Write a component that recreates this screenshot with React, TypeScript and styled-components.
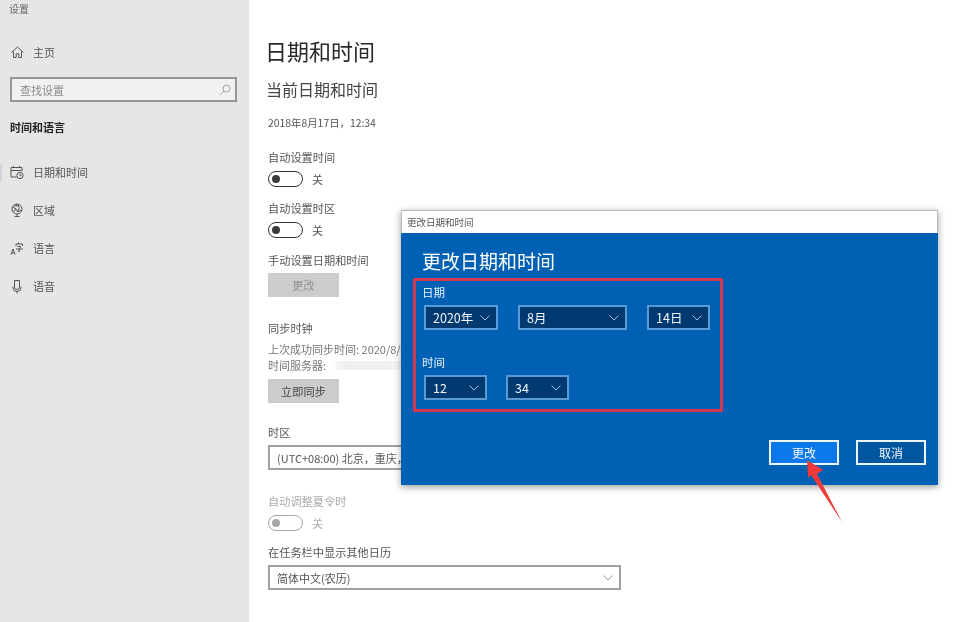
import React from "react";
import styled, { createGlobalStyle } from "styled-components";

const Global = createGlobalStyle`
  html, body { margin: 0; padding: 0; background: #fff; }
  body { font-family: "Noto Sans CJK SC", "Liberation Sans", sans-serif; overflow: hidden; }
  * { box-sizing: border-box; }
`;

const Page = styled.div`
  position: relative;
  width: 960px;
  height: 622px;
  display: flex;
  overflow: hidden;
  background: #fff;
  filter: blur(0.3px);
`;

const Sidebar = styled.aside`
  width: 249px;
  height: 622px;
  flex: none;
  background: #e6e6e6;
  display: flex;
  flex-direction: column;
  color: #444;
`;
const AppName = styled.div`
  font-size: 10px;
  line-height: 14px;
  color: #666;
  padding: 2px 0 0 9px;
`;
const NavRow = styled.div<{ $top: number }>`
  display: flex;
  align-items: center;
  height: 20px;
  margin-top: ${(p) => p.$top}px;
  padding-left: 10px;
  font-size: 11px;
  color: #555;
  position: relative;
`;
const NavIcon = styled.svg`
  width: 15px;
  height: 15px;
  flex: none;
  margin-right: 8px;
  fill: none;
  stroke: #555;
  stroke-width: 1;
`;
const ActiveMark = styled.div`
  position: absolute;
  left: 0;
  top: 2px;
  width: 2px;
  height: 18px;
  background: #d4d4dc;
`;
const Search = styled.div`
  width: 227px;
  height: 25px;
  margin: 15px 0 0 10px;
  border: 2px solid #969696;
  background: #f1f1f1;
  display: flex;
  align-items: center;
  justify-content: space-between;
  padding: 0 4px 0 8px;
  font-size: 11px;
  color: #8a8a8a;
`;
const SectionHead = styled.div`
  margin: 15px 0 0 10px;
  font-size: 11px;
  line-height: 20px;
  font-weight: 700;
  color: #222;
`;

const Main = styled.main`
  flex: 1;
  padding: 0 0 0 19px;
  color: #3a3a3a;
`;
const Title = styled.h1`
  margin: 34px 0 0 -3px;
  font-size: 22px;
  line-height: 32px;
  font-weight: 400;
  color: #2a2a2a;
`;
const Subtitle = styled.h2`
  margin: 11px 0 0 -2px;
  font-size: 16px;
  line-height: 24px;
  font-weight: 400;
  color: #444;
`;
const Label = styled.div<{ $top: number; $dim?: boolean }>`
  margin-top: ${(p) => p.$top}px;
  font-size: 11.2px;
  line-height: 16px;
  color: ${(p) => (p.$dim ? "#ababab" : "#555")};
  white-space: nowrap;
`;
const DateLine = styled.div`
  margin-top: 14px;
  font-size: 10.4px;
  line-height: 16px;
  color: #555;
  white-space: nowrap;
`;
const ToggleRow = styled.div<{ $dim?: boolean }>`
  margin-top: 6px;
  height: 16px;
  display: flex;
  align-items: center;
  gap: 9px;
  font-size: 11px;
  color: ${(p) => (p.$dim ? "#ababab" : "#555")};
`;
const Track = styled.div<{ $dim?: boolean }>`
  width: 35px;
  height: 16px;
  border-radius: 8px;
  border: 1.5px solid ${(p) => (p.$dim ? "#a6a6a6" : "#333")};
  padding: 2.5px;
  &::before {
    content: "";
    display: block;
    width: 8px;
    height: 8px;
    border-radius: 50%;
    background: ${(p) => (p.$dim ? "#a6a6a6" : "#3a3a3a")};
  }
`;
const GrayButton = styled.div<{ $top: number; $dim?: boolean }>`
  width: 71px;
  height: 24px;
  margin-top: ${(p) => p.$top}px;
  background: #cccccc;
  display: flex;
  align-items: center;
  justify-content: center;
  font-size: 11.2px;
  color: ${(p) => (p.$dim ? "#939393" : "#444")};
`;
const InfoLine = styled.div<{ $top?: number }>`
  display: flex;
  align-items: center;
  margin-top: ${(p) => p.$top ?? 0}px;
  font-size: 11px;
  line-height: 16px;
  color: #777;
  white-space: nowrap;
`;
const BlurredValue = styled.span`
  width: 74px;
  height: 9px;
  margin-left: 4px;
  background: linear-gradient(90deg, #fff, #efefef 20%, #f1f1f1 80%, #fafafa);
`;
const SelectBox = styled.div<{ $top: number }>`
  width: 353px;
  height: 25px;
  margin-top: ${(p) => p.$top}px;
  border: 2px solid #a0a0a0;
  background: #fff;
  display: flex;
  align-items: center;
  justify-content: space-between;
  padding: 0 6px 0 7px;
  font-size: 11px;
  color: #555;
  white-space: nowrap;
  overflow: hidden;
`;
const Chevron = styled.svg<{ $light?: boolean }>`
  width: 10px;
  height: 6px;
  flex: none;
  fill: none;
  stroke: ${(p) => (p.$light ? "#9fc0e2" : "#9a9a9a")};
  stroke-width: 1;
`;

const Dialog = styled.section`
  position: absolute;
  left: 401px;
  top: 210px;
  width: 537px;
  height: 275px;
  display: flex;
  flex-direction: column;
  background: #0060b4;
  box-shadow: 0 2px 7px rgba(0, 0, 0, 0.4);
`;
const DialogBar = styled.div`
  height: 23px;
  flex: none;
  background: #fff;
  border: 1px solid #b9b9b9;
  border-bottom: none;
  font-size: 9.5px;
  line-height: 22px;
  padding-left: 5px;
  color: #555;
`;
const DialogTitle = styled.h2`
  margin: 13px 0 0 21px;
  font-size: 19px;
  line-height: 30px;
  font-weight: 400;
  color: #fff;
`;
const Highlight = styled.div`
  width: 310px;
  height: 134px;
  margin: 2px 0 0 12px;
  border: 3px solid #d8374d;
  padding: 3px 0 0 6px;
  display: flex;
  flex-direction: column;
`;
const FieldLabel = styled.div<{ $top?: number }>`
  margin-top: ${(p) => p.$top ?? 0}px;
  font-size: 11.5px;
  line-height: 16px;
  color: #e6f0fa;
`;
const SelectRow = styled.div<{ $gap: number }>`
  display: flex;
  gap: ${(p) => p.$gap}px;
  margin: 5px 0 0 2px;
`;
const DarkSelect = styled.div<{ $w: number }>`
  width: ${(p) => p.$w}px;
  height: 25px;
  background: #003a70;
  border: 2px solid #5b9bd5;
  display: flex;
  align-items: center;
  justify-content: space-between;
  padding: 0 6px 0 7px;
  font-size: 12.5px;
  color: #f2f6fb;
`;
const DialogActions = styled.div`
  display: flex;
  justify-content: flex-end;
  gap: 17px;
  margin-top: 28px;
  padding-right: 12px;
`;
const ActionButton = styled.div<{ $primary?: boolean }>`
  width: 70px;
  height: 25px;
  border: 2px solid #eef6fd;
  background: ${(p) => (p.$primary ? "#0a78e8" : "#00569f")};
  display: flex;
  align-items: center;
  justify-content: center;
  font-size: 12px;
  color: #f4f8fc;
`;
const Arrow = styled.svg`
  position: absolute;
  left: 800px;
  top: 455px;
  width: 50px;
  height: 72px;
`;

const ChevronDown = ({ light }: { light?: boolean }) => (
  <Chevron $light={light} viewBox="0 0 10 6">
    <path d="M0.5 0.5 L5 5 L9.5 0.5" />
  </Chevron>
);

const Toggle = ({ dim }: { dim?: boolean }) => (
  <ToggleRow $dim={dim}>
    <Track $dim={dim} />
    关
  </ToggleRow>
);

export default function App() {
  return (
    <Page>
      <Global />
      <Sidebar>
        <AppName>设置</AppName>
        <NavRow $top={26}>
          <NavIcon viewBox="0 0 15 15">
            <path d="M1.5 7.5 L7.5 2 L13.5 7.5 M3.5 6.5 V12.5 H6.2 V8.8 H8.8 V12.5 H11.5 V6.5" />
          </NavIcon>
          主页
        </NavRow>
        <Search>
          查找设置
          <svg width="12" height="12" viewBox="0 0 12 12" fill="none" stroke="#a0a0a0">
            <circle cx="7.5" cy="4.5" r="3.5" />
            <path d="M5 7 L1 11" />
          </svg>
        </Search>
        <SectionHead>时间和语言</SectionHead>
        <NavRow $top={25}>
          <ActiveMark />
          <NavIcon viewBox="0 0 15 15">
            <path d="M6.5 12 H1 V2.5 H12 V6 M1 5.5 H12 M3.5 1 V3 M9.5 1 V3" />
            <circle cx="10" cy="10.5" r="3.2" />
            <path d="M10 8.8 V10.7 H11.5" />
          </NavIcon>
          日期和时间
        </NavRow>
        <NavRow $top={18}>
          <NavIcon viewBox="0 0 15 15">
            <circle cx="7" cy="6" r="5" />
            <path d="M2.5 4 L6 6 L3.5 9 M6 1.5 L9.5 4.5 L7.5 8.5 L11.5 7.5 M4 3 L9 2.5 M6 6 L8 9 M7 11 V13.5 M4.5 13.5 H9.5" />
          </NavIcon>
          区域
        </NavRow>
        <NavRow $top={18}>
          <NavIcon viewBox="0 0 15 15">
            <path d="M1 13.5 L3 8 L5 13.5 M1.7 12 H4.3 M8.5 1.5 V3 M6 5 V3 H12.5 V5 M7.5 5.5 H11 L9.3 7.2 V10.5 L8 10.5 M6 8 H13" />
          </NavIcon>
          语言
        </NavRow>
        <NavRow $top={18}>
          <NavIcon viewBox="0 0 15 15">
            <path d="M4.5 1.5 H9.5 V8 A2.5 2.5 0 0 1 4.5 8 Z" />
            <path d="M3 7.5 V8.5 A4 4 0 0 0 11 8.5 V7.5 M7 12.5 V14.5" />
          </NavIcon>
          语音
        </NavRow>
      </Sidebar>
      <Main>
        <Title>日期和时间</Title>
        <Subtitle>当前日期和时间</Subtitle>
        <DateLine>2018年8月17日，12:34</DateLine>
        <Label $top={18}>自动设置时间</Label>
        <Toggle />
        <Label $top={13}>自动设置时区</Label>
        <Toggle />
        <Label $top={14}>手动设置日期和时间</Label>
        <GrayButton $top={5} $dim>更改</GrayButton>
        <Label $top={23}>同步时钟</Label>
        <InfoLine $top={5}>上次成功同步时间: 2020/8/</InfoLine>
        <InfoLine>
          时间服务器:<BlurredValue />
        </InfoLine>
        <GrayButton $top={6}>立即同步</GrayButton>
        <Label $top={21}>时区</Label>
        <SelectBox $top={5}>(UTC+08:00) 北京，重庆，香港特别行政区，乌鲁木齐</SelectBox>
        <Label $top={23} $dim>自动调整夏令时</Label>
        <Toggle dim />
        <Label $top={13}>在任务栏中显示其他日历</Label>
        <SelectBox $top={5}>
          简体中文(农历)
          <ChevronDown />
        </SelectBox>
      </Main>
      <Dialog>
        <DialogBar>更改日期和时间</DialogBar>
        <DialogTitle>更改日期和时间</DialogTitle>
        <Highlight>
          <FieldLabel>日期</FieldLabel>
          <SelectRow $gap={20}>
            <DarkSelect $w={74}>2020年<ChevronDown light /></DarkSelect>
            <DarkSelect $w={109}>8月<ChevronDown light /></DarkSelect>
            <DarkSelect $w={63}>14日<ChevronDown light /></DarkSelect>
          </SelectRow>
          <FieldLabel $top={24}>时间</FieldLabel>
          <SelectRow $gap={19}>
            <DarkSelect $w={63}>12<ChevronDown light /></DarkSelect>
            <DarkSelect $w={63}>34<ChevronDown light /></DarkSelect>
          </SelectRow>
        </Highlight>
        <DialogActions>
          <ActionButton $primary>更改</ActionButton>
          <ActionButton>取消</ActionButton>
        </DialogActions>
      </Dialog>
      <Arrow viewBox="800 455 50 72">
        <polygon points="807,460 823,470 817,474 842,522 811,475 808,478" fill="#ef3a3a" />
      </Arrow>
    </Page>
  );
}
